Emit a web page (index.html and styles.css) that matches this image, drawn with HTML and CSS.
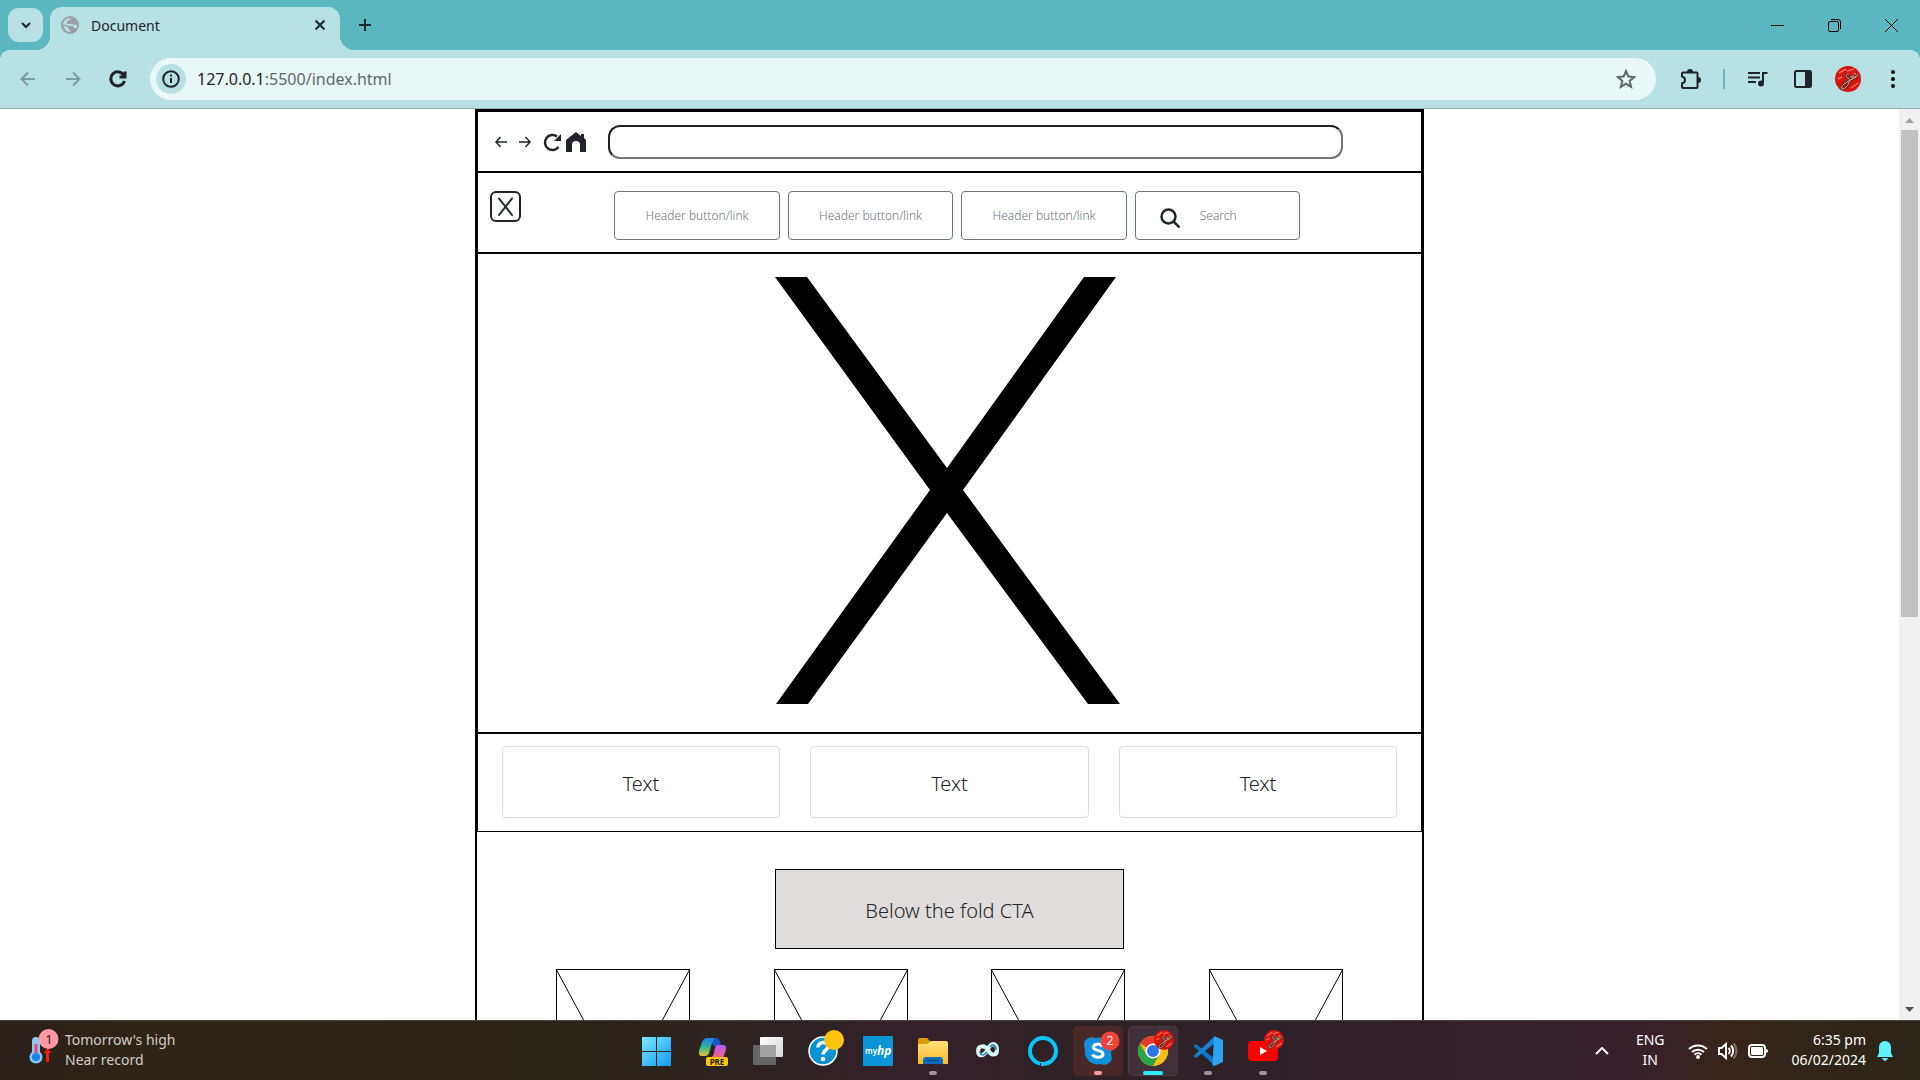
FILE: index.html
```html
<!DOCTYPE html>
<html lang="en">
<head>
<meta charset="utf-8">
<meta name="viewport" content="width=device-width, initial-scale=1">
<title>Document</title>
<link rel="stylesheet" href="styles.css">
</head>
<body>
<svg class="defs" width="0" height="0" aria-hidden="true">
  <defs>
    <symbol id="avatar" viewBox="0 0 26 26">
      <circle cx="13" cy="13" r="13" fill="#d8140f"/>
      <path d="M4 7l7-4M3 13l4-2M16 22l7-5M19 7l4 3M12 5l7-2" stroke="#ff6a5e" stroke-width="1.5" fill="none"/>
      <path d="M14 8c-3-1-4 3-1 4s1 7-3 10-5-1-1-4 8-4 12-8M15 11c2-2 3 1 1 3M18 9c0 3 1 4 3 2l2-3" fill="none" stroke="#5b2018" stroke-width="2.6"/>
      <path d="M14 8c-3-1-4 3-1 4s1 7-3 10-5-1-1-4 8-4 12-8M15 11c2-2 3 1 1 3M18 9c0 3 1 4 3 2l2-3" fill="none" stroke="#d9b8a4" stroke-width="1"/>
    </symbol>
  </defs>
</svg>

<header class="titlebar">
  <button class="tab-search" aria-label="Search tabs"><svg width="12" height="12" viewBox="0 0 12 12"><path d="M2 4l4 4 4-4" class="ink"/></svg></button>
  <div class="tab">
    <svg width="18" height="18" viewBox="0 0 18 18"><circle cx="9" cy="9" r="9" fill="#9aa0a6"/><path d="M10 2c-2 .5-1 2-2.500 2.500S5.500 6 6 7.500s3-.5 5 .5 3 1 5 .5q.5 2-.5 4c-2-.5-3-1-4-2.500H8.500L2 8.500C2.500 4.500 5.500 1.500 10 2zM2.500 10.500C5 10 7 11 7.500 12.500s2 1 2 3.500C6 16 3.500 14 2.500 10.500z" fill="#b8e1e4"/></svg>
    <span class="tab-title">Document</span>
    <button class="tab-close" aria-label="Close tab"><svg width="12" height="12" viewBox="0 0 12 12"><path d="M1.500 1.500l9 9M10.500 1.500l-9 9" class="ink"/></svg></button>
  </div>
  <button class="new-tab" aria-label="New tab"><svg width="14" height="14" viewBox="0 0 14 14"><path d="M7 1v12M1 7h12" class="ink"/></svg></button>
  <div class="window-controls">
    <button aria-label="Minimize"><svg width="13" height="13" viewBox="0 0 13 13"><path d="M0 6.500h13" class="thin"/></svg></button>
    <button aria-label="Restore"><svg width="13" height="13" viewBox="0 0 13 13"><rect x=".5" y="2.500" width="10" height="10" rx="1.500" class="thin"/><path d="M3 .5h7a2.500 2.500 0 0 1 2.500 2.500v7" class="thin"/></svg></button>
    <button aria-label="Close"><svg width="13" height="13" viewBox="0 0 13 13"><path d="M0 0l13 13M13 0L0 13" class="thin"/></svg></button>
  </div>
</header>

<nav class="toolbar" aria-label="Browser toolbar">
  <button class="tool" aria-label="Back" disabled><svg width="16" height="16" viewBox="0 0 16 16"><path d="M15 8H2M8 1.500L1.500 8 8 14.500" class="ink faded"/></svg></button>
  <button class="tool" aria-label="Forward" disabled><svg width="16" height="16" viewBox="0 0 16 16"><path d="M1 8h13M8 1.500L14.500 8 8 14.500" class="ink faded"/></svg></button>
  <button class="tool" aria-label="Reload"><svg width="18" height="18" viewBox="0 0 18 18"><path d="M15.500 11a7 7 0 1 1-.5-5.500M16 1.500V7h-5.500" class="ink reload-mark"/></svg></button>
  <div class="address">
    <button class="site-info" aria-label="Site information"><svg width="18" height="18" viewBox="0 0 18 18"><circle cx="9" cy="9" r="7.800" class="ink"/><path d="M9 8v5M9 4.600v2" class="ink"/></svg></button>
    <a class="url" href="#"><span class="host">127.0.0.1</span>:5500/index.html</a>
    <button class="star" aria-label="Bookmark this tab"><svg width="20" height="20" viewBox="0 0 20 20"><path d="M10 2l2.300 5.500 6 .5-4.600 3.900 1.400 5.900L10 14.600l-5.100 3.200 1.400-5.900L1.700 8l6-.5z" fill="none" stroke="#5f6668" stroke-width="2"/></svg></button>
  </div>
  <button class="tool" aria-label="Extensions"><svg width="22" height="22" viewBox="0 0 22 22"><path d="M3 4.500h13.500a1 1 0 0 1 1 1V19a1 1 0 0 1-1 1H3a1 1 0 0 1-1-1v-3.500c4-1 4-6 0-7V5.500a1 1 0 0 1 1-1" class="ink"/><path d="M7 4a3 3 0 0 1 6 0zM18 9a3 3 0 0 1 0 6z" fill="#1f2426"/></svg></button>
  <span class="divider"></span>
  <button class="tool" aria-label="Media controls"><svg width="20" height="16" viewBox="0 0 20 16"><path d="M0 2h12M0 6.500h12M0 11h8M19.500 2H15v10" class="ink"/><circle cx="13" cy="12.500" r="3" fill="#1f2426"/></svg></button>
  <button class="tool" aria-label="Side panel"><svg width="18" height="18" viewBox="0 0 18 18"><rect x="1" y="1" width="16" height="16" rx="1.500" class="ink"/><path d="M11 1h6v16h-6z" fill="#1f2426"/></svg></button>
  <button class="tool" aria-label="Profile"><svg width="26" height="26"><use href="#avatar"/></svg></button>
  <button class="tool" aria-label="Menu"><svg width="4" height="18" viewBox="0 0 4 18"><circle cx="2" cy="2" r="2"/><circle cx="2" cy="9" r="2"/><circle cx="2" cy="16" r="2"/></svg></button>
</nav>

<div class="viewport">
  <main class="page">
    <div class="frame">
      <section class="block mock-browser">
        <div class="mock-icons">
          <svg width="12" height="12" viewBox="0 0 12 12"><path d="M12 6H1M5.500 1L1 6l4.500 5" class="mark"/></svg>
          <svg width="12" height="12" viewBox="0 0 12 12"><path d="M0 6h11M6.500 1L11 6l-4.500 5" class="mark"/></svg>
          <svg class="reload" width="20" height="20" viewBox="0 0 20 20"><path d="M16.500 15a7.500 7.500 0 1 1-1.500-10.500" fill="none" stroke="#212529" stroke-width="2.500"/><path d="M19 2v7h-7z" fill="#212529"/></svg>
          <svg width="20" height="20" viewBox="1 0 20 20"><path d="M1 8L11 0l5 4V2h3v4l2 2v12h-6v-7a4 4 0 0 0-8 0v7H1z" fill="#212529"/></svg>
        </div>
        <input class="mock-address" type="text" aria-label="Address">
      </section>
      <section class="block site-header">
        <svg class="logo" width="31" height="31" viewBox="0 0 31 31"><rect x="1" y="1" width="29" height="29" rx="5" fill="none" stroke="#212529" stroke-width="2"/><path d="M9 7.500L22 24M22 7.500L9 24" fill="none" stroke="#212529" stroke-width="2" stroke-linecap="round"/></svg>
        <div class="links">
          <button class="link-box">Header button/link</button>
          <button class="link-box">Header button/link</button>
          <button class="link-box">Header button/link</button>
          <label class="link-box search">
            <svg width="20" height="20" viewBox="0 0 20 20"><circle cx="8.500" cy="8.500" r="7" fill="none" stroke="#212529" stroke-width="2.500"/><path d="M13.500 13.500l6 6" stroke="#212529" stroke-width="2.500"/></svg>
            <input type="text" placeholder="Search" aria-label="Search">
          </label>
        </div>
      </section>
      <section class="block hero">
        <svg width="349" height="428" viewBox="0 0 349 428"><path d="M0 0h32l140 191L309 0h32L188 213l157 214h-32L172 236 33 427H1l154-214z"/></svg>
      </section>
      <section class="block cards">
        <div class="card">Text</div>
        <div class="card">Text</div>
        <div class="card">Text</div>
      </section>
      <section class="fold">
        <button class="cta">Below the fold CTA</button>
        <div class="thumbs">
          <svg class="thumb" viewBox="0 0 134 248"><rect x=".5" y=".5" width="133" height="247"/><path d="M0 0l134 248M134 0L0 248"/></svg>
          <svg class="thumb" viewBox="0 0 134 248"><rect x=".5" y=".5" width="133" height="247"/><path d="M0 0l134 248M134 0L0 248"/></svg>
          <svg class="thumb" viewBox="0 0 134 248"><rect x=".5" y=".5" width="133" height="247"/><path d="M0 0l134 248M134 0L0 248"/></svg>
          <svg class="thumb" viewBox="0 0 134 248"><rect x=".5" y=".5" width="133" height="247"/><path d="M0 0l134 248M134 0L0 248"/></svg>
        </div>
      </section>
    </div>
  </main>
  <div class="scrollbar" aria-hidden="true">
    <svg width="21" height="21" viewBox="0 0 21 21"><path d="M6 14h9l-4.500-5z" fill="#a3a3a3"/></svg>
    <div class="track"><div class="thumb-bar"></div></div>
    <svg width="21" height="21" viewBox="0 0 21 21"><path d="M6 8h9l-4.500 5z" fill="#505050"/></svg>
  </div>
</div>

<footer class="taskbar">
  <div class="weather">
    <svg width="30" height="36" viewBox="0 0 30 36"><path d="M17 23h3v10h-3zM14.500 24l4-5 4 5z" fill="#f11f0c"/><path d="M3 12a4 4 0 0 1 8 0v11a6.500 6.500 0 1 1-8 0z" fill="#8cc8f5"/><path d="M5.500 15h3v12h-3z" fill="#e5486c"/><circle cx="7" cy="28" r="4" fill="#1686e0"/><circle cx="19.500" cy="10" r="10" fill="#ff99a4"/><text x="20" y="15" class="badge-dark">1</text></svg>
    <p>Tomorrow's high<br>Near record</p>
  </div>
  <div class="apps">
    <button class="app" aria-label="Start"><svg viewBox="0 0 50 50"><defs><linearGradient id="win" gradientUnits="userSpaceOnUse" x1="9" y1="10" x2="38" y2="40"><stop offset="0" stop-color="#7eeaff"/><stop offset="1" stop-color="#1199f5"/></linearGradient></defs><path d="M9 11h14v14H9zM24 11h14v14H24zM9 26h14v14H9zM24 26h14v14H24z" fill="url(#win)"/></svg></button>
    <button class="app" aria-label="Copilot"><svg viewBox="0 0 50 50"><defs><linearGradient id="cpa" x1="0" y1="0" x2="0" y2="1"><stop offset="0" stop-color="#1b7fe8"/><stop offset=".5" stop-color="#2fb59a"/><stop offset="1" stop-color="#e3c62c"/></linearGradient><linearGradient id="cpb" x1="0" y1="0" x2="0" y2="1"><stop offset="0" stop-color="#b35cf2"/><stop offset="1" stop-color="#f5607d"/></linearGradient></defs><path d="M20 12h8q3 0 4 4l1 4h-7z" fill="#1a58d6"/><path d="M19 12h8q-2 1-3 5l-3 10q-1 3-4 3h-3q-4 0-3-5l3-9q2-4 5-4z" fill="url(#cpa)"/><path d="M29 19h6q4 0 3 5l-3 8H22q3-1 4-5l1-5q1-3 2-3z" fill="url(#cpb)"/><rect x="18" y="31" width="22" height="9" rx="2" fill="#fdc70c"/><text x="29" y="38.500" class="pre">PRE</text></svg></button>
    <button class="app" aria-label="Task view"><svg viewBox="0 0 50 50"><defs><linearGradient id="tv" x1="0" y1="0" x2="1" y2="1"><stop offset="0" stop-color="#fff"/><stop offset="1" stop-color="#d5d5d5"/></linearGradient></defs><rect x="10" y="19" width="23" height="20" rx="1" fill="#666"/><rect x="17" y="11" width="23" height="20" rx="1" fill="url(#tv)"/><path d="M17 19h16v12H17z" fill="#a2a2a2"/></svg></button>
    <button class="app" aria-label="Help"><svg viewBox="0 0 50 50"><circle cx="25" cy="25" r="14" fill="#0a93d3" stroke="#fff" stroke-width="1.500"/><path d="M20 21.500c0-6.500 10-6.500 10-1 0 4-5 3.500-5 8" fill="none" stroke="#fff" stroke-width="3.500"/><circle cx="25" cy="33" r="2.300" fill="#fff"/><circle cx="36" cy="14" r="10" fill="#ffc20e"/></svg></button>
    <button class="app" aria-label="myHP"><svg viewBox="0 0 50 50"><rect x="10" y="10" width="30" height="30" rx="1" fill="#0a96d6"/><text x="12" y="28" class="my">my</text><text x="24" y="29" class="hp">hp</text></svg></button>
    <button class="app" aria-label="File Explorer"><svg viewBox="0 0 50 50"><defs><linearGradient id="fe" x1="0" y1="0" x2="0" y2="1"><stop offset="0" stop-color="#ffe07a"/><stop offset="1" stop-color="#f9bb2b"/></linearGradient></defs><path d="M10 14q0-2 2-2h7l4 4h-2v5H10z" fill="#dc9a08"/><path d="M10 18h9l4-3h15q2 0 2 2v21H10z" fill="url(#fe)"/><path d="M15 38v-4q0-3 3-3h14q3 0 3 3v4z" fill="#0f6cbd"/><path d="M18 34.500h13" stroke="#0a4b8c" stroke-width="1.500"/></svg><span class="running"></span></button>
    <button class="app" aria-label="Infinity"><svg viewBox="0 0 50 50"><path d="M25 24c-3-5-10-5-10 1s6 6 10-2 9-5 9 1-6 6-9 0" fill="none" stroke="#d9fbf5" stroke-width="4"/><path d="M24 26c-3 4-7 4-7-1M27 21c3-4 6-2 6 3" fill="none" stroke="#2c7cb8" stroke-width="1.500"/></svg></button>
    <button class="app" aria-label="Alexa"><svg viewBox="0 0 50 50"><circle cx="25" cy="25" r="13" fill="none" stroke="#0ac5fb" stroke-width="4"/><path d="M23 40v-3q5-1 8-3l2 3q-4 3-10 3z" fill="#0ac5fb"/><path d="M22.500 40.500V37" stroke="#2c2226"/></svg></button>
    <button class="app alert" aria-label="Skype"><svg viewBox="0 0 50 50"><path d="M11 18a8 8 0 0 1 11-6 13 13 0 0 1 16 16 7.500 7.500 0 0 1-10 10A13 13 0 0 1 12 23q-1-2-1-5z" fill="#1190dc"/><path d="M29.500 20.500c-2-3.500-9-3-9 .7 0 4.200 9.500 2.300 9.500 6.800 0 4-8 4.500-10.500.5" fill="none" stroke="#fff" stroke-width="3"/><circle cx="37" cy="15" r="9.500" fill="#f1433a"/><text x="37" y="19" class="badge-light">2</text></svg><span class="running pink"></span></button>
    <button class="app active" aria-label="Google Chrome"><svg viewBox="0 0 50 50"><circle cx="25" cy="25" r="15" fill="#fbbc16"/><path d="M25 25L12 17.500A15 15 0 0 1 38 17.500H25z" fill="#e33b2e"/><path d="M12 17.500A15 15 0 0 0 25 40l6.500-11L25 25l-6.500 3.700z" fill="#2ba24c"/><path d="M25 17.500h13a15 15 0 0 1-13 22.500l6.500-11.300z" fill="#fbbc16"/><circle cx="25" cy="25" r="7.500" fill="#fff"/><circle cx="25" cy="25" r="6" fill="#2d74ea"/><use href="#avatar" x="26" y="4" width="20" height="20"/></svg><span class="running wide"></span></button>
    <button class="app" aria-label="Visual Studio Code"><svg viewBox="0 0 50 50"><path d="M10.500 20l2.500-2L32 33v7z" fill="#0b76c4"/><path d="M10.500 30l2.500 2 19-15v-7z" fill="#1583d0"/><path d="M31 10l9 4v22l-9 4-1.500-1z" fill="#2ea3f2"/></svg><span class="running"></span></button>
    <button class="app" aria-label="YouTube"><svg viewBox="0 0 50 50"><rect x="10" y="15" width="30" height="20" rx="4" fill="#f00"/><path d="M22 21v8l7-4z" fill="#fff"/><use href="#avatar" x="26" y="4" width="20" height="20"/></svg><span class="running"></span></button>
  </div>
  <div class="tray">
    <svg width="14" height="8" viewBox="0 0 14 8"><path d="M1 7l6-6 6 6" class="white"/></svg>
    <p class="lang">ENG<br>IN</p>
    <div class="status">
      <svg width="20" height="16" viewBox="0 0 20 16"><path d="M1 6a13 13 0 0 1 18 0M4 9a9 9 0 0 1 12 0M6.500 11.700a5 5 0 0 1 7 0" class="white"/><circle cx="10" cy="14" r="2" fill="#fff"/></svg>
      <svg width="20" height="18" viewBox="0 0 20 18"><path d="M1 6h2.500L8 2v14l-4.500-4H1zM10.500 6a4 4 0 0 1 0 6M13 3.500a8 8 0 0 1 0 11" class="white"/><path d="M15.500 1.500a11 11 0 0 1 0 15" class="white dim"/></svg>
      <svg width="20" height="14" viewBox="0 0 20 14"><rect x="1" y="1" width="16" height="12" rx="3" class="white"/><rect x="3" y="3" width="12" height="8" rx="1" fill="#fff"/><path d="M18 5l2 1v2l-2 1z" fill="#fff"/></svg>
    </div>
    <p class="clock">6:35 pm<br>06/02/2024</p>
    <svg width="16" height="20" viewBox="0 0 16 20"><path d="M8 0a6 6 0 0 1 6 6v6l2 4H0l2-4V6a6 6 0 0 1 6-6zM5 17h6q-1 3-3 3t-3-3z" fill="#5ff3ff"/></svg>
  </div>
</footer>
</body>
</html>
```
FILE: styles.css
```css
* {
  box-sizing: border-box;
}

body {
  margin: 0;
  height: 100vh;
  display: flex;
  flex-direction: column;
  overflow: hidden;
  background: #fff;
  color: #212529;
  font-family: "Noto Sans", "Open Sans", sans-serif;
  font-size: 14px;
}

button,
input {
  margin: 0;
  padding: 0;
  border: 0;
  background: none;
  color: inherit;
  font: inherit;
}

button {
  display: flex;
  align-items: center;
  justify-content: center;
}

p {
  margin: 0;
}

svg {
  display: block;
  flex: none;
}

.defs {
  position: absolute;
}

.ink {
  fill: none;
  stroke: #1f2426;
  stroke-width: 2;
}

.faded {
  stroke: #7d9a9c;
}

.reload-mark {
  stroke-width: 3;
}

.thin {
  fill: none;
  stroke: #000;
  stroke-width: 1;
}

/* Title bar */

.titlebar {
  display: flex;
  flex: none;
  height: 50px;
  padding-left: 8px;
  background: #5bb8c1;
}

.tab-search {
  width: 35px;
  height: 34px;
  margin: 8px 7px 0 0;
  border-radius: 11px;
  background: #b8e1e4;
}

.tab {
  position: relative;
  display: flex;
  align-items: center;
  gap: 12px;
  width: 290px;
  margin-top: 7px;
  padding: 0 14px 7px 11px;
  border-radius: 12px 12px 0 0;
  background: #b8e1e4;
}

.tab::before,
.tab::after {
  content: "";
  position: absolute;
  bottom: 0;
  width: 14px;
  height: 14px;
}

.tab::before {
  right: 100%;
  background: radial-gradient(circle at 0 0, transparent 14px, #b8e1e4 14px);
}

.tab::after {
  left: 100%;
  background: radial-gradient(circle at 100% 0, transparent 14px, #b8e1e4 14px);
}

.tab-title {
  flex: 1;
}

.new-tab {
  width: 50px;
}

.window-controls {
  display: flex;
  margin-left: auto;
}

.window-controls button {
  width: 57px;
}

/* Toolbar */

.toolbar {
  display: flex;
  flex: none;
  align-items: center;
  height: 59px;
  padding: 0 5px;
  border-bottom: 1px solid #8fb0b3;
  background: linear-gradient(#b8e1e4, #b8e1e4) 0 10px no-repeat, radial-gradient(circle at 10px 10px, #b8e1e4 10px, transparent 10px) 0 0 / 10px 10px no-repeat, radial-gradient(circle at 0 10px, #b8e1e4 10px, transparent 10px) 100% 0 / 10px 10px no-repeat, linear-gradient(#b8e1e4, #b8e1e4) 10px 0 / calc(100% - 20px) 10px no-repeat, #5bb8c1;
}

.tool {
  width: 45px;
  height: 42px;
}

.address {
  display: flex;
  flex: 1;
  align-items: center;
  height: 42px;
  margin: 0 12px 0 10px;
  padding: 0 20px 0 6px;
  border-radius: 21px;
  background: #eaf7f7;
}

.site-info {
  width: 30px;
  height: 30px;
  margin-right: 11px;
  border-radius: 50%;
  background: #b8e1e4;
}

.url {
  flex: 1;
  color: #62686a;
  font-size: 16px;
  text-decoration: none;
}

.host {
  color: #1f2426;
}

.divider {
  width: 2px;
  height: 20px;
  margin: 0 10px;
  background: #5bb8c1;
}

/* Page area */

.viewport {
  display: flex;
  flex: 1;
  min-height: 0;
}

.page {
  flex: 1;
  overflow: hidden;
  font-weight: 300;
}

.frame {
  width: 50%;
  margin: 0 auto;
  border: 2px solid #000;
}

.block {
  border: 1px solid #000;
}

.mark {
  fill: none;
  stroke: #212529;
  stroke-width: 1.5;
}

.mock-browser {
  display: flex;
  align-items: center;
  gap: 22px;
  padding: 13px 78px 12px 17px;
}

.mock-icons {
  display: flex;
  align-items: center;
  gap: 12px;
}

.reload {
  margin: 0 -8px 0 -1px;
}

.mock-address {
  flex: 1;
  min-width: 0;
  height: 34px;
  padding: 0 10px;
  border: 2px solid;
  border-color: #212225 #767676 #767676 #212225;
  border-radius: 12px;
}

.site-header {
  display: flex;
  justify-content: space-between;
  padding: 18px 121px 12px 12px;
}

.links {
  display: grid;
  grid-template-columns: repeat(4, minmax(0, 1fr));
  gap: 8px;
  width: 85%;
  max-width: 686px;
}

.link-box {
  height: 49px;
  border: 1px solid #6c757d;
  border-radius: 4px;
  color: #6c757d;
  font-size: 12px;
}

.search {
  display: flex;
  align-items: center;
  gap: 20px;
  padding-left: 24px;
}

.search svg {
  margin-top: 5px;
}

.search input {
  flex: 1;
  min-width: 0;
}

.search input::placeholder {
  color: #6c757d;
  opacity: 1;
}

.hero {
  display: flex;
  justify-content: center;
  padding: 23px 0 27px;
}

.cards {
  display: grid;
  grid-template-columns: repeat(3, 1fr);
  gap: 30px;
  padding: 12px 24px 13px;
}

.card,
.cta {
  padding-top: 2px;
  font-size: 20px;
}

.card {
  display: flex;
  align-items: center;
  justify-content: center;
  height: 72px;
  border: 1px solid #dedede;
  border-radius: 4px;
}

.fold {
  padding: 37px 79px 40px;
}

.cta {
  width: 349px;
  height: 80px;
  margin: 0 auto 20px;
  border: 1px solid #000;
  background: #e1dddc;
}

.thumbs {
  display: flex;
  justify-content: space-between;
}

.thumb {
  width: 134px;
  height: 248px;
  fill: none;
  stroke: #000;
}

/* Scrollbar */

.scrollbar {
  display: flex;
  flex-direction: column;
  width: 21px;
  background: #f1f1f1;
}

.track {
  flex: 1;
  padding: 0 2px;
}

.thumb-bar {
  height: 56%;
  background: #c1c1c1;
}

/* Taskbar */

.taskbar {
  display: grid;
  grid-template-columns: 1fr auto 1fr;
  align-items: center;
  flex: none;
  height: 60px;
  border-top: 1px solid #45413c;
  background: linear-gradient(90deg, #2b201a 0, #2e2416 8%, #2b2418 30%, #2e2224 42%, #352029 47%, #2e2226 55%, #2f2029 70%, #382029 86%, #38241a 90%, #2f2518 94%, #2c2519 100%);
  color: #fff;
  line-height: 20px;
}

.taskbar p {
  padding-bottom: 2px;
}

.weather {
  display: flex;
  align-items: center;
  gap: 6px;
  padding-left: 29px;
  color: #d2cfc9;
}

.weather svg {
  margin-bottom: 8px;
}

.badge-dark,
.badge-light {
  fill: #2b201a;
  font-size: 13px;
  text-anchor: middle;
}

.badge-light {
  fill: #fff;
  font-size: 12px;
}

.pre {
  fill: #1a1a1a;
  font-size: 8px;
  font-weight: 700;
  text-anchor: middle;
}

.my {
  fill: #fff;
  font-size: 8px;
  font-weight: 600;
}

.hp {
  fill: #fff;
  font-size: 12px;
  font-style: italic;
  font-weight: 700;
}

.apps {
  display: flex;
  gap: 5px;
}

.app {
  position: relative;
  width: 50px;
  height: 50px;
  border-radius: 5px;
}

.app svg {
  width: 50px;
  height: 50px;
}

.alert {
  background: #4a2729;
}

.active {
  background: #40303a;
  box-shadow: inset 0 0 0 1px #4b3c44;
}

.running {
  position: absolute;
  bottom: 1px;
  left: 21px;
  width: 8px;
  height: 4px;
  border-radius: 2px;
  background: #9c959a;
}

.pink {
  background: #ff99a4;
}

.wide {
  left: 15px;
  width: 20px;
  background: #2ceeff;
}

.tray {
  display: flex;
  align-items: center;
  justify-content: flex-end;
  padding-right: 27px;
}

.white {
  fill: none;
  stroke: #fff;
  stroke-width: 2;
}

.dim {
  opacity: 0.35;
}

.lang {
  margin: 0 23px 0 27px;
  text-align: center;
}

.status {
  display: flex;
  align-items: center;
  gap: 10px;
}

.clock {
  margin: 0 11px 0 24px;
  text-align: right;
}
```
